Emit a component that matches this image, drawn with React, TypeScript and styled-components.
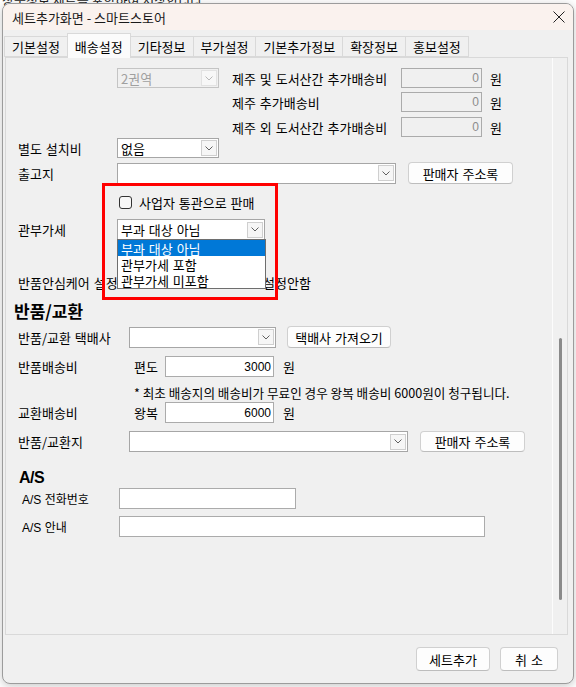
import React from 'react';
import styled, { createGlobalStyle } from 'styled-components';

const GlobalStyle = createGlobalStyle`
  html, body { margin: 0; padding: 0; background: #fff; }
  body {
    font-family: "Noto Sans CJK KR", "Noto Sans", sans-serif;
    font-size: 13px;
    color: #000;
  }
`;

const Desktop = styled.div`
  position: relative;
  width: 576px;
  height: 687px;
  overflow: hidden;
  background: #fff;
`;

const BehindText = styled.div`
  position: absolute;
  top: -10px;
  left: 2px;
  font-size: 13px;
  color: #222;
  white-space: nowrap;
`;

const Window = styled.div`
  position: absolute;
  left: 2px;
  top: 3px;
  width: 572px;
  height: 681px;
  box-sizing: border-box;
  border: 1px solid #9c9c9c;
  border-radius: 8px;
  background: #f0f0f0;
  box-shadow: 0 2px 10px rgba(0, 0, 0, 0.22);
  display: flex;
  flex-direction: column;
  overflow: hidden;
`;

const TitleBar = styled.div`
  height: 26px;
  flex-shrink: 0;
  display: flex;
  align-items: center;
  justify-content: space-between;
  padding: 0 8px 0 9px;
  background: #faf2ee;
  font-size: 13px;
  color: #1a1a1a;
`;

const TabStrip = styled.div`
  height: 27px;
  flex-shrink: 0;
  display: flex;
  align-items: flex-end;
  padding-left: 1px;
`;

const Tab = styled.div<{ $active?: boolean }>`
  position: relative;
  height: ${(p) => (p.$active ? 25 : 21)}px;
  margin-bottom: ${(p) => (p.$active ? -1 : 0)}px;
  margin-right: -1px;
  padding: 0 7px;
  box-sizing: border-box;
  display: flex;
  align-items: center;
  border: 1px solid #d9d9d9;
  border-bottom: ${(p) => (p.$active ? 'none' : '1px solid #d9d9d9')};
  background: ${(p) => (p.$active ? '#fbfbfb' : '#f0f0f0')};
  z-index: ${(p) => (p.$active ? 2 : 1)};
  font-size: 13px;
  white-space: nowrap;
`;

const TabPanel = styled.div`
  height: 578px;
  width: 563px;
  margin-left: 2px;
  box-sizing: border-box;
  border: 1px solid #d9d9d9;
  display: flex;
  flex-shrink: 0;
`;

const Content = styled.div`
  position: relative;
  flex: 1;
  border-right: 1px solid #fcfcfc;
  padding-left: 12px;
  display: flex;
  flex-direction: column;
  overflow: hidden;
`;

const ScrollTrack = styled.div`
  width: 14px;
  flex-shrink: 0;
  padding: 280px 0 0 6px;
  box-sizing: border-box;
`;

const ScrollThumb = styled.div`
  width: 3px;
  height: 262px;
  border-radius: 2px;
  background: #8a8a8a;
`;

const Footer = styled.div`
  flex: 1;
  display: flex;
  justify-content: flex-end;
  align-items: flex-start;
  gap: 10px;
  padding: 12px 15px 0 0;
`;

const Row = styled.div<{ $mt: number; $h: number }>`
  display: flex;
  align-items: center;
  margin-top: ${(p) => p.$mt}px;
  height: ${(p) => p.$h}px;
  flex-shrink: 0;
  white-space: nowrap;
`;

const Label = styled.span<{ $w: number; $ml?: number }>`
  width: ${(p) => p.$w}px;
  margin-left: ${(p) => p.$ml ?? 0}px;
  flex-shrink: 0;
  white-space: nowrap;
  word-spacing: 1px;
`;

const AsLabel = styled(Label)`
  font-family: "Liberation Sans", "Noto Sans CJK KR", sans-serif;
  font-size: 12px;
  word-spacing: 0;
`;

const Heading = styled.div<{ $mt: number; $ml: number }>`
  margin-top: ${(p) => p.$mt}px;
  margin-left: ${(p) => p.$ml}px;
  height: 18px;
  line-height: 18px;
  font-size: 17px;
  font-weight: 700;
  flex-shrink: 0;
`;

const AsHeading = styled(Heading)`
  font-family: "Liberation Sans", Arial, sans-serif;
  font-size: 16px;
  letter-spacing: -0.5px;
`;

const ComboBox = styled.div<{ $w: number; $h?: number; $disabled?: boolean }>`
  position: relative;
  width: ${(p) => p.$w}px;
  height: ${(p) => p.$h ?? 20}px;
  box-sizing: border-box;
  border: 1px solid ${(p) => (p.$disabled ? '#c4c4c4' : '#a6a6a6')};
  background: ${(p) => (p.$disabled ? '#f0f0f0' : '#fff')};
  color: ${(p) => (p.$disabled ? '#a0a0a0' : '#000')};
  display: flex;
  align-items: center;
  padding-left: 3px;
  flex-shrink: 0;
`;

const ComboText = styled.span`
  flex: 1;
  word-spacing: 1px;
`;

const ArrowBox = styled.span<{ $disabled?: boolean }>`
  width: 16px;
  height: 16px;
  margin-right: 1px;
  box-sizing: border-box;
  border: 1px solid ${(p) => (p.$disabled ? '#e2e2e2' : '#cfcfcf')};
  background: ${(p) => (p.$disabled ? '#f7f7f7' : '#f6f6f6')};
  display: flex;
  align-items: center;
  justify-content: center;
`;

const DropList = styled.div`
  position: absolute;
  top: 100%;
  left: -1px;
  width: 149px;
  box-sizing: border-box;
  border: 1px solid #6e6e6e;
  background: #fff;
  z-index: 3;
`;

const DropItem = styled.div<{ $selected?: boolean }>`
  height: 16px;
  display: flex;
  align-items: center;
  overflow: hidden;
  padding-left: 3px;
  background: ${(p) => (p.$selected ? '#0078d7' : '#fff')};
  color: ${(p) => (p.$selected ? '#fff' : '#000')};
  word-spacing: 1px;
`;

const Field = styled.div<{ $w: number; $h?: number; $disabled?: boolean }>`
  width: ${(p) => p.$w}px;
  height: ${(p) => p.$h ?? 20}px;
  box-sizing: border-box;
  border: 1px solid #ababab;
  background: ${(p) => (p.$disabled ? '#f0f0f0' : '#fff')};
  color: ${(p) => (p.$disabled ? '#8c8c8c' : '#000')};
  display: flex;
  align-items: center;
  justify-content: flex-end;
  padding-right: 2px;
  flex-shrink: 0;
  font-family: "Liberation Sans", "Noto Sans CJK KR", sans-serif;
  font-size: 12px;
`;

const Unit = styled.span<{ $ml: number }>`
  margin-left: ${(p) => p.$ml}px;
`;

const Spacer = styled.span<{ $w: number }>`
  width: ${(p) => p.$w}px;
  flex-shrink: 0;
`;

const Button = styled.button<{ $w: number; $h?: number; $ml?: number }>`
  width: ${(p) => p.$w}px;
  height: ${(p) => p.$h ?? 22}px;
  margin-left: ${(p) => p.$ml ?? 0}px;
  flex-shrink: 0;
  box-sizing: border-box;
  border: 1px solid #d0d0d0;
  border-bottom-color: #bdbdbd;
  border-radius: 4px;
  background: #fdfdfd;
  font-family: "Noto Sans CJK KR", sans-serif;
  font-size: 13px;
  color: #000;
  padding: 0;
  word-spacing: 1px;
`;

const CheckBox = styled.span`
  width: 13px;
  height: 13px;
  box-sizing: border-box;
  border: 1px solid #333;
  border-radius: 3px;
  background: #f7f7f7;
  flex-shrink: 0;
`;

const CheckText = styled.span`
  margin-left: 7px;
  word-spacing: 1px;
`;

const Radio = styled.span<{ $checked?: boolean }>`
  width: 13px;
  height: 13px;
  box-sizing: border-box;
  border-radius: 50%;
  border: ${(p) => (p.$checked ? '4px solid #0067c0' : '1px solid #5a5a5a')};
  background: #fff;
  flex-shrink: 0;
`;

const RadioText = styled.span`
  margin-left: 4px;
`;

const Note = styled.div`
  margin-top: 9px;
  margin-left: 116px;
  height: 14px;
  line-height: 14px;
  font-size: 12.6px;
  white-space: nowrap;
  flex-shrink: 0;
`;

const Highlight = styled.div`
  position: absolute;
  left: 96px;
  top: 125px;
  width: 176px;
  height: 117px;
  box-sizing: border-box;
  border: 3px solid #f00;
  z-index: 4;
  pointer-events: none;
`;

const Chevron = ({ color = '#606060' }: { color?: string }) => (
  <svg width="8" height="5" viewBox="0 0 8 5">
    <polyline points="0.5,0.5 4,4 7.5,0.5" fill="none" stroke={color} strokeWidth="1" />
  </svg>
);

const CloseIcon = () => (
  <svg width="12" height="12" viewBox="0 0 12 12">
    <path d="M0.5 0.5 L11.5 11.5 M11.5 0.5 L0.5 11.5" stroke="#222" strokeWidth="1" />
  </svg>
);

const Combo = ({
  w,
  h,
  text,
  disabled,
  children,
}: {
  w: number;
  h?: number;
  text?: string;
  disabled?: boolean;
  children?: React.ReactNode;
}) => (
  <ComboBox $w={w} $h={h} $disabled={disabled}>
    <ComboText>{text}</ComboText>
    <ArrowBox $disabled={disabled}>
      <Chevron color={disabled ? '#b8b8b8' : '#606060'} />
    </ArrowBox>
    {children}
  </ComboBox>
);

const tabs = ['기본설정', '배송설정', '기타정보', '부가설정', '기본추가정보', '확장정보', '홍보설정'];

const App = () => {
  return (
    <Desktop>
      <GlobalStyle />
      <BehindText>상품정보 세트를 포함하여 저장합니다</BehindText>
      <Window>
        <TitleBar>
          <span>세트추가화면 - 스마트스토어</span>
          <CloseIcon />
        </TitleBar>
        <TabStrip>
          {tabs.map((t) => (
            <Tab key={t} $active={t === '배송설정'}>
              {t}
            </Tab>
          ))}
        </TabStrip>
        <TabPanel>
          <Content>
            <Row $mt={10} $h={20}>
              <Spacer $w={99} />
              <Combo w={102} text="2권역" disabled />
              <Spacer $w={13} />
              <Label $w={169}>제주 및 도서산간 추가배송비</Label>
              <Field $w={81} $disabled>0</Field>
              <Unit $ml={8}>원</Unit>
            </Row>
            <Row $mt={4} $h={20}>
              <Spacer $w={214} />
              <Label $w={169}>제주 추가배송비</Label>
              <Field $w={81} $disabled>0</Field>
              <Unit $ml={8}>원</Unit>
            </Row>
            <Row $mt={5} $h={20}>
              <Spacer $w={214} />
              <Label $w={169}>제주 외 도서산간 추가배송비</Label>
              <Field $w={81} $disabled>0</Field>
              <Unit $ml={8}>원</Unit>
            </Row>
            <Row $mt={1} $h={20}>
              <Label $w={99}>별도 설치비</Label>
              <Combo w={102} text="없음" />
            </Row>
            <Row $mt={4} $h={22}>
              <Label $w={99}>출고지</Label>
              <Combo w={279} h={21} />
              <Button $w={105} $ml={12}>판매자 주소록</Button>
            </Row>
            <Row $mt={10} $h={16}>
              <Spacer $w={101} />
              <CheckBox />
              <CheckText>사업자 통관으로 판매</CheckText>
            </Row>
            <Row $mt={9} $h={21}>
              <Label $w={99}>관부가세</Label>
              <Combo w={148} h={21} text="부과 대상 아님">
                <DropList>
                  <DropItem $selected>부과 대상 아님</DropItem>
                  <DropItem>관부가세 포함</DropItem>
                  <DropItem>관부가세 미포함</DropItem>
                </DropList>
              </Combo>
            </Row>
            <Row $mt={34} $h={16}>
              <Label $w={167}>반품안심케어 설정</Label>
              <Radio />
              <Spacer $w={48} />
              <Radio $checked />
              <RadioText>설정안함</RadioText>
            </Row>
            <Heading $mt={12} $ml={-4}>반품/교환</Heading>
            <Row $mt={6} $h={22}>
              <Label $w={111}>반품/교환 택배사</Label>
              <Combo w={147} h={21} />
              <Button $w={104} $ml={11}>택배사 가져오기</Button>
            </Row>
            <Row $mt={8} $h={21}>
              <Label $w={116}>반품배송비</Label>
              <Label $w={31}>편도</Label>
              <Field $w={109} $h={21}>3000</Field>
              <Unit $ml={9}>원</Unit>
            </Row>
            <Note>* 최초 배송지의 배송비가 무료인 경우 왕복 배송비 6000원이 청구됩니다.</Note>
            <Row $mt={2} $h={21}>
              <Label $w={116}>교환배송비</Label>
              <Label $w={31}>왕복</Label>
              <Field $w={109} $h={21}>6000</Field>
              <Unit $ml={9}>원</Unit>
            </Row>
            <Row $mt={8} $h={21}>
              <Label $w={111}>반품/교환지</Label>
              <Combo w={279} h={21} />
              <Button $w={105} $h={21} $ml={12}>판매자 주소록</Button>
            </Row>
            <AsHeading $mt={17} $ml={1}>A/S</AsHeading>
            <Row $mt={1} $h={21}>
              <AsLabel $w={97} $ml={4}>A/S 전화번호</AsLabel>
              <Field $w={177} $h={21} />
            </Row>
            <Row $mt={7} $h={21}>
              <AsLabel $w={97} $ml={4}>A/S 안내</AsLabel>
              <Field $w={366} $h={21} />
            </Row>
            <Highlight />
          </Content>
          <ScrollTrack>
            <ScrollThumb />
          </ScrollTrack>
        </TabPanel>
        <Footer>
          <Button $w={74} $h={24}>세트추가</Button>
          <Button $w={58} $h={24}>취 소</Button>
        </Footer>
      </Window>
    </Desktop>
  );
};

export default App;
